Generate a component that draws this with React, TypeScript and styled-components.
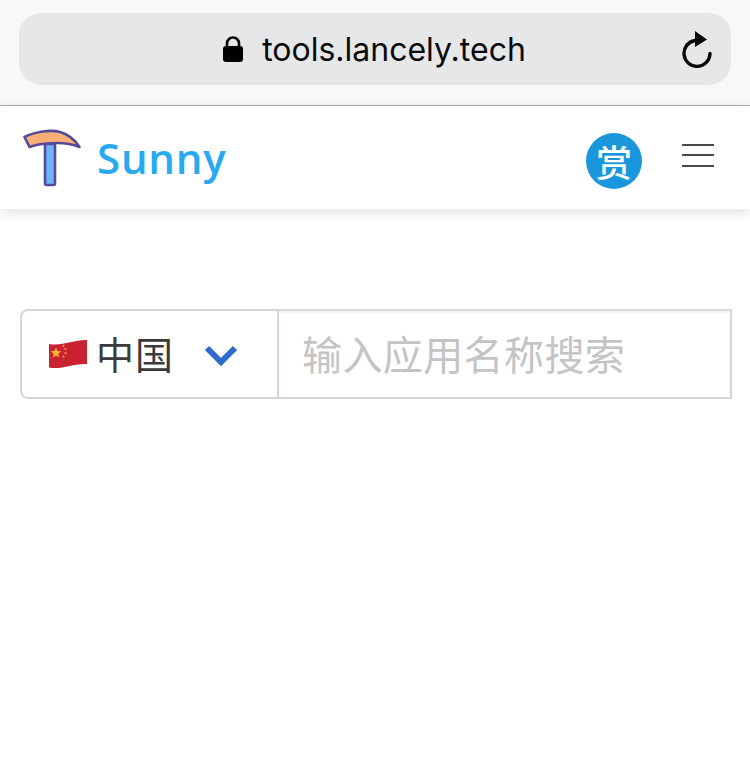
import React from 'react'
import styled, { createGlobalStyle } from 'styled-components'

const GlobalStyle = createGlobalStyle`
  html, body {
    margin: 0;
    padding: 0;
    background: #fff;
  }
  * {
    box-sizing: border-box;
  }
`

const Page = styled.div`
  width: 750px;
  height: 780px;
  overflow: hidden;
  background: #fff;
  font-family: 'Inter', 'Liberation Sans', 'Noto Sans CJK SC', sans-serif;
`

const BrowserBar = styled.div`
  height: 106px;
  padding: 13px 19px 0;
  background: #f8f8f8;
  border-bottom: 1px solid #b2b2b2;
`

const AddressPill = styled.div`
  position: relative;
  height: 72px;
  display: flex;
  align-items: center;
  justify-content: center;
  gap: 18px;
  padding-right: 2px;
  border-radius: 22px;
  background: #e6e7e9;
`

const Url = styled.span`
  font-size: 32px;
  line-height: 1;
  margin-top: 1px;
  color: #0a0a0a;
`

const ReloadButton = styled.div`
  position: absolute;
  right: 19px;
  top: 17px;
  width: 32px;
  height: 38px;
`

const Header = styled.header`
  height: 103px;
  display: flex;
  align-items: center;
  justify-content: space-between;
  padding: 0 36px 0 23px;
  background: #fff;
  box-shadow: 0 3px 12px rgba(0, 0, 0, 0.13);
`

const Brand = styled.div`
  display: flex;
  align-items: center;
  gap: 16px;
`

const BrandName = styled.span`
  font-family: 'Open Sans', 'Lato', sans-serif;
  font-weight: 600;
  font-size: 42px;
  line-height: 1;
  color: #27aaef;
  letter-spacing: 0.8px;
`

const HeaderActions = styled.div`
  display: flex;
  align-items: center;
  gap: 40px;
`

const RewardBadge = styled.div`
  width: 56px;
  height: 56px;
  margin-top: 7px;
  border-radius: 50%;
  display: flex;
  align-items: center;
  justify-content: center;
  background: #1a96dc;
  color: #fff;
  font-family: 'Noto Sans CJK SC', sans-serif;
  font-weight: 500;
  font-size: 36px;
  line-height: 1;
`

const MenuButton = styled.div`
  width: 32px;
  height: 23px;
  display: flex;
  flex-direction: column;
  justify-content: space-between;
  margin-bottom: 5px;
`

const MenuLine = styled.span`
  display: block;
  height: 2px;
  background: #4a4a4a;
`

const Main = styled.main`
  padding: 100px 18px 0 20px;
`

const SearchGroup = styled.div`
  height: 90px;
  display: flex;
`

const CountrySelect = styled.div`
  width: 257px;
  display: flex;
  align-items: center;
  padding-left: 26px;
  border: 2px solid #d6d6d6;
  border-right: 0;
  border-radius: 8px 0 0 8px;
`

const CountryName = styled.span`
  margin-left: 8px;
  margin-bottom: 3px;
  font-family: 'Noto Sans CJK SC', sans-serif;
  font-size: 38px;
  line-height: 1;
  letter-spacing: 1px;
  color: #3a3a3a;
`

const Chevron = styled.svg`
  margin-left: 30px;
  margin-top: 2px;
`

const SearchField = styled.div`
  flex: 1;
  display: flex;
  align-items: center;
  padding-left: 23px;
  border: 2px solid #d6d6d6;
  box-shadow: inset 0 2px 3px rgba(0, 0, 0, 0.05);
`

const Placeholder = styled.span`
  margin-bottom: 3px;
  font-family: 'Noto Sans CJK SC', sans-serif;
  font-size: 40px;
  line-height: 1;
  letter-spacing: 0.4px;
  color: #c4c4c4;
`

const LockIcon = () => (
  <svg width="22" height="28" viewBox="0 0 22 28">
    <path d="M5 13V8.500a6 6 0 0 1 12 0V13" fill="none" stroke="#000" strokeWidth="2.6" />
    <rect x="1" y="11" width="20" height="16" rx="3" fill="#000" />
  </svg>
)

const ReloadIcon = () => (
  <svg width="32" height="38" viewBox="0 0 32 38">
    <path
      d="M15 10.500a13 13 0 1 0 15 13"
      fill="none"
      stroke="#0a0a0a"
      strokeWidth="3.4"
      strokeLinecap="round"
    />
    <path d="M15 1l12 8.500L15 17z" fill="#0a0a0a" />
  </svg>
)

const PickaxeLogo = () => (
  <svg width="58" height="58" viewBox="0 0 58 58">
    <rect x="22" y="15" width="10" height="41" rx="1.500" fill="#6db5f7" stroke="#56499a" strokeWidth="2.600" />
    <path
      d="M1.500 8C12 2.500 28 .5 37 3 46 5.500 52 11 56.500 18 46 13.500 30 13.500 19 15 14 15.500 10 17 6.500 18z"
      fill="#f9ae74"
      stroke="#56499a"
      strokeWidth="2.600"
      strokeLinejoin="round"
    />
  </svg>
)

const ChinaFlag = () => (
  <svg width="40" height="30" viewBox="0 0 40 30">
    <path d="M1 5C14 7.500 26 .5 39 1v24C26 24 14 31 1 28.500z" fill="#c92233" />
    <path d="M8 8.500l1.500 3.500 3.800.3-2.900 2.500.9 3.700L8 16.500l-3.300 2 .9-3.700-2.900-2.500 3.800-.3z" fill="#f6b52f" />
    <circle cx="15.500" cy="6.800" r="1" fill="#f6b52f" />
    <circle cx="17.500" cy="10" r="1" fill="#f6b52f" />
    <circle cx="17.500" cy="14" r="1" fill="#f6b52f" />
    <circle cx="15.500" cy="17.500" r="1" fill="#f6b52f" />
  </svg>
)

const App = () => (
  <Page>
    <GlobalStyle />
    <BrowserBar>
      <AddressPill>
        <LockIcon />
        <Url>tools.lancely.tech</Url>
        <ReloadButton>
          <ReloadIcon />
        </ReloadButton>
      </AddressPill>
    </BrowserBar>
    <Header>
      <Brand>
        <PickaxeLogo />
        <BrandName>Sunny</BrandName>
      </Brand>
      <HeaderActions>
        <RewardBadge>赏</RewardBadge>
        <MenuButton>
          <MenuLine />
          <MenuLine />
          <MenuLine />
        </MenuButton>
      </HeaderActions>
    </Header>
    <Main>
      <SearchGroup>
        <CountrySelect>
          <ChinaFlag />
          <CountryName>中国</CountryName>
          <Chevron width="34" height="22" viewBox="0 0 34 22">
            <path d="M3 4l14 14L31 4" fill="none" stroke="#2f6bcb" strokeWidth="6" />
          </Chevron>
        </CountrySelect>
        <SearchField>
          <Placeholder>输入应用名称搜索</Placeholder>
        </SearchField>
      </SearchGroup>
    </Main>
  </Page>
)

export default App
